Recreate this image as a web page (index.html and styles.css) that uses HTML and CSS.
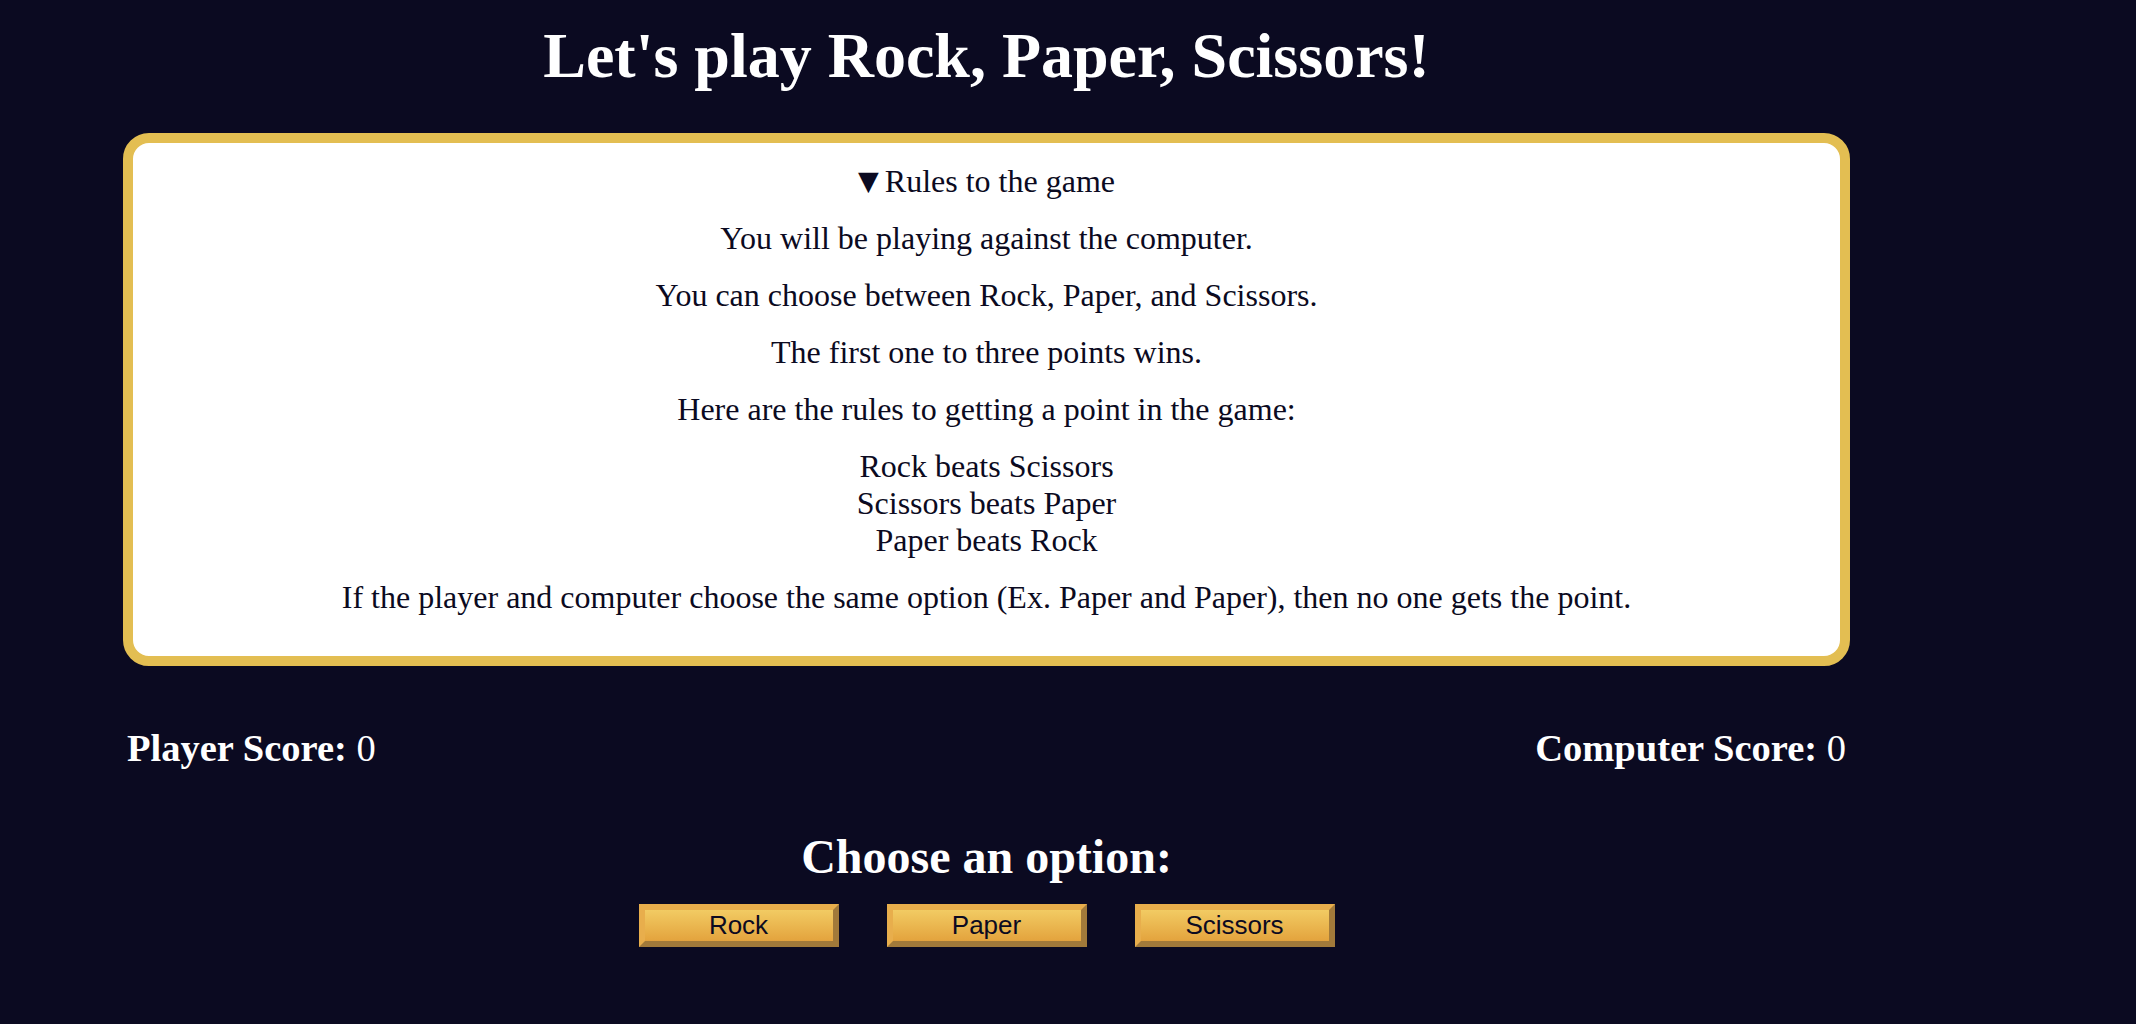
FILE: index.html
```html
<!DOCTYPE html>
<html lang="en">
<head>
<meta charset="utf-8">
<title>Rock, Paper, Scissors</title>
<link rel="stylesheet" href="styles.css">
</head>
<body>
<main class="container">
  <h1 class="title">Let's play Rock, Paper, Scissors!</h1>
  <section class="rules-box">
    <details class="rules" open>
      <summary class="rules-summary">Rules to the game</summary>
      <p>You will be playing against the computer.</p>
      <p>You can choose between Rock, Paper, and Scissors.</p>
      <p>The first one to three points wins.</p>
      <p>Here are the rules to getting a point in the game:</p>
      <p>Rock beats Scissors<br>Scissors beats Paper<br>Paper beats Rock</p>
      <p>If the player and computer choose the same option (Ex. Paper and Paper), then no one gets the point.</p>
    </details>
  </section>
  <div class="scores">
    <h3 class="score"><strong>Player Score:</strong> <span class="num">0</span></h3>
    <h3 class="score"><strong>Computer Score:</strong> <span class="num">0</span></h3>
  </div>
  <h2 class="choose">Choose an option:</h2>
  <div class="options">
    <button class="option">Rock</button>
    <button class="option">Paper</button>
    <button class="option">Scissors</button>
  </div>
</main>
</body>
</html>
```
FILE: styles.css
```css
html, body {
  margin: 0;
  padding: 0;
}
body {
  background: #0b0a21;
  color: #ffffff;
  font-family: "Liberation Serif", "Times New Roman", serif;
  font-size: 32px;
}
.container {
  width: 1727px;
  margin-left: 123px;
  display: flex;
  flex-direction: column;
  align-items: stretch;
}
.title {
  font-size: 64px;
  font-weight: bold;
  text-align: center;
  margin: 19px 0 40px;
  line-height: normal;
}
.rules-box {
  background: #ffffff;
  border: 10px solid #e3be52;
  border-radius: 26px;
  color: #0b0a21;
  padding: 20px;
  text-align: center;
}
.rules p {
  margin: 20px 0;
}
.rules-summary {
  cursor: pointer;
  list-style: none;
}
.rules-summary::-webkit-details-marker {
  display: none;
}
.rules-summary::before {
  content: "\25BC";
  font-family: "DejaVu Sans", sans-serif;
  font-size: 27px;
  margin-right: 6px;
  vertical-align: 2px;
}
.scores {
  display: flex;
  justify-content: space-between;
  padding: 0 4px;
  margin-top: 60px;
}
.score {
  font-size: 38.5px;
  margin: 0;
  font-weight: normal;
  line-height: normal;
}
.score strong {
  font-weight: bold;
}
.choose {
  font-size: 48px;
  font-weight: bold;
  text-align: center;
  margin: 59px 0 20px;
  line-height: normal;
}
.options {
  display: flex;
  justify-content: center;
  gap: 48px;
}
.option {
  box-sizing: border-box;
  width: 200px;
  height: 43px;
  padding: 0;
  font-family: "Liberation Sans", Arial, sans-serif;
  font-size: 26px;
  line-height: 31px;
  color: #0b0a21;
  background: linear-gradient(#f2cb63, #e3a33d);
  border: 6px solid;
  border-color: #e8ae4c #a27a3a #a27a3a #e8ae4c;
  cursor: pointer;
}
```
